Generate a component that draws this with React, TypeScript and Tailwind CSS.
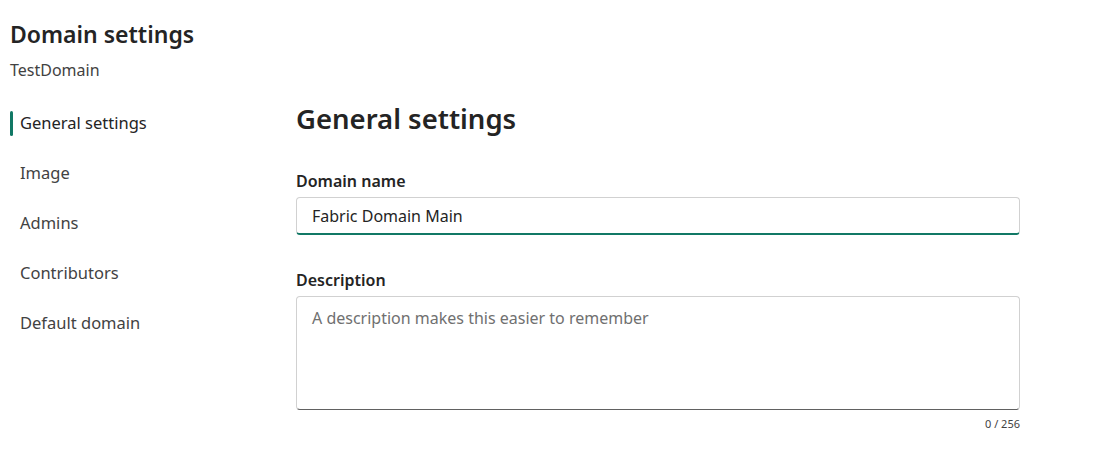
export default function App() {
  const nav = ['General settings', 'Image', 'Admins', 'Contributors', 'Default domain'];

  return (
    <div className="w-[1110px] h-[471px] bg-white px-[10px] pt-[18px] text-[#242424] font-['Noto_Sans',sans-serif]">
      <h1 className="text-[23px] leading-[32px] font-semibold">Domain settings</h1>
      <p className="mt-[9px] text-[16px] leading-[22px] text-[#424242]">TestDomain</p>

      <div className="flex mt-[17px]">
        {/* Side nav */}
        <nav className="w-[286px] flex flex-col">
          {nav.map((item, i) => (
            <div key={item} className="h-[50px] flex items-center">
              <div className={`w-[3px] h-[25px] rounded-full ${i === 0 ? 'bg-[#117865]' : 'bg-transparent'}`} />
              <span className={`ml-[7px] text-[16.5px] ${i === 0 ? 'text-[#242424]' : 'text-[#424242]'}`}>{item}</span>
            </div>
          ))}
        </nav>

        {/* Main */}
        <div className="w-[724px] pt-[3px]">
          <h2 className="text-[27.5px] leading-[36px] font-semibold">General settings</h2>

          <label className="block mt-[33px] text-[16px] leading-[22px] font-semibold">Domain name</label>
          <div className="mt-[5px] h-[38px] rounded-[4px] border border-[#d1d1d1] border-b-2 border-b-[#117865] flex items-center px-[15px] text-[16px]">
            Fabric Domain Main
          </div>

          <label className="block mt-[34px] text-[16px] leading-[22px] font-semibold">Description</label>
          <div className="mt-[5px] h-[114px] rounded-[4px] border border-[#d1d1d1] border-b-[#616161] px-[15px] pt-[9px] text-[16px] text-[#707070]">
            A description makes this easier to remember
          </div>
          <div className="mt-[7px] text-right text-[11px] leading-[14px] text-[#424242]">0 / 256</div>
        </div>
      </div>
    </div>
  );
}
